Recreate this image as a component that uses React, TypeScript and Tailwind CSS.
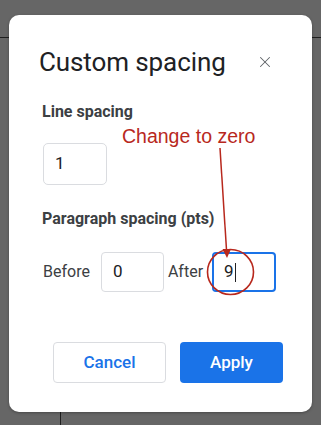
import { X } from "lucide-react";

const FONT = { fontFamily: "Roboto, 'Liberation Sans', sans-serif" };

function Field({ value, active }: { value: string; active?: boolean }) {
  return (
    <div
      className={
        active
          ? "h-[40px] w-[64px] rounded-[4px] border-2 border-[#1a73e8] flex items-center pl-[10px] text-[17px] text-[#202124]"
          : "h-[40px] w-[63px] rounded-[4px] border border-[#dadce0] flex items-center pl-[11px] text-[17px] text-[#202124]"
      }
    >
      {value}
      {active && <span className="ml-[1px] h-[19px] w-[1px] bg-[#202124]" />}
    </div>
  );
}

export default function App() {
  return (
    <div className="relative w-[321px] h-[425px] bg-[#666666] overflow-hidden" style={FONT}>
      {/* page behind the modal */}
      <div className="h-[38px] border-b border-[#1f1f1f]" />
      <div className="ml-[60px] h-[387px] border-l border-[#1f1f1f]" />

      {/* dialog */}
      <div className="absolute left-[9px] top-[15px] w-[303px] h-[397px] rounded-[10px] bg-white shadow-[0_1px_3px_rgba(0,0,0,0.3)] pl-[33px] pr-[29px] pt-[31px] flex flex-col">
        <div className="flex items-center justify-between -ml-[3px]">
          <h1 className="text-[26px] leading-[32px] text-[#202124] tracking-[-0.1px]">Custom spacing</h1>
          <X className="mr-[9px] text-[#5f6368]" size={18} strokeWidth={1.4} />
        </div>

        <div className="mt-[24px] text-[16px] leading-[20px] font-bold text-[#3c4043]">Line spacing</div>
        <div className="mt-[21px] ml-[1px]">
          <div className="h-[42px] w-[64px] rounded-[5px] border border-[#dadce0] flex items-center pl-[11px] text-[17px] text-[#202124]">
            1
          </div>
        </div>

        <div className="mt-[24px] text-[16px] leading-[20px] font-bold text-[#3c4043]">Paragraph spacing (pts)</div>
        <div className="mt-[23px] ml-[1px] flex items-center text-[16px] text-[#3c4043]">
          <span>Before</span>
          <div className="ml-[11px]">
            <Field value="0" />
          </div>
          <span className="ml-[4px]">After</span>
          <div className="ml-[9px]">
            <Field value="9" active />
          </div>
        </div>

        <div className="mt-auto mb-[29px] flex justify-end gap-[14px]">
          <button className="h-[41px] w-[113px] rounded-[4px] border border-[#dadce0] text-[17px] font-medium text-[#1a73e8]">
            Cancel
          </button>
          <button className="h-[41px] w-[103px] rounded-[4px] bg-[#1a73e8] text-[17px] font-medium text-white">
            Apply
          </button>
        </div>
      </div>

      {/* annotation */}
      <div
        className="absolute left-[122px] top-[124px] text-[19.5px] leading-[24px] text-[#b8281d]"
        style={{ fontFamily: "'Liberation Sans', Arial, sans-serif" }}
      >
        Change to zero
      </div>
      <svg className="absolute left-0 top-0" width="321" height="425" viewBox="0 0 321 425" fill="none">
        <line x1="220" y1="148" x2="226.5" y2="250" stroke="#b8281d" strokeWidth="1.5" />
        <path d="M222.5 249 L231 249 L227 258 Z" fill="#b8281d" />
        <ellipse cx="230.5" cy="272" rx="23" ry="22.5" stroke="#b8281d" strokeWidth="1.6" />
      </svg>
    </div>
  );
}
